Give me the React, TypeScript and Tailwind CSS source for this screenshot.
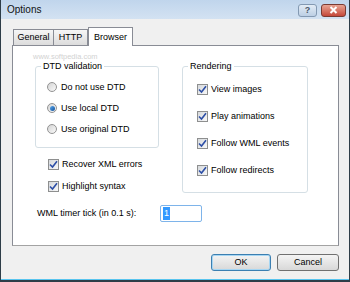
import React from "react";

const font = { fontFamily: '"Liberation Sans", Arial, sans-serif' };

function Check({ label }: { label: string }) {
  return (
    <div className="flex items-center h-[11px]">
      <div className="w-[11px] h-[11px] border border-[#8e8f8f] bg-gradient-to-br from-[#d6d9dc] to-[#f8f8f8] flex items-center justify-center">
        <svg width="9" height="9" viewBox="0 0 9 9">
          <path d="M1 4.5 L3.5 7 L8 1.2" fill="none" stroke="#2c4ea6" strokeWidth="1.6" />
        </svg>
      </div>
      <span className="ml-[3px] text-[9px] leading-none text-black">{label}</span>
    </div>
  );
}

function Radio({ label, on }: { label: string; on?: boolean }) {
  return (
    <div className="flex items-center h-[10px]">
      <div className="w-[10px] h-[10px] rounded-full border border-[#939393] bg-gradient-to-br from-[#d4d4d4] to-[#fafafa] flex items-center justify-center">
        {on && <div className="w-[5px] h-[5px] rounded-full bg-gradient-to-br from-[#5aa8ee] to-[#10509a]" />}
      </div>
      <span className="ml-[4px] text-[9px] leading-none text-black">{label}</span>
    </div>
  );
}

export default function App() {
  return (
    <div
      className="w-[350px] h-[282px] bg-[#f0f0f0] border-x border-b-2 border-[#2e3d48] flex flex-col relative overflow-hidden"
      style={font}
    >
      {/* title bar */}
      <div className="h-[19px] bg-gradient-to-b from-[#c0d5ec] to-[#d3e2f2] flex items-center pl-[6px] pr-[3px] shrink-0">
        <span className="text-[10px] text-[#111] leading-none">Options</span>
        <div className="ml-auto flex items-center gap-[4px] mt-[1px]">
          <div className="w-[19px] h-[13px] rounded-[3px] border border-[#8399b2] bg-gradient-to-b from-[#e3ecf6] to-[#bccfe4] flex items-center justify-center">
            <span className="text-[9px] font-bold text-[#4b5868] leading-none">?</span>
          </div>
          <div className="w-[25px] h-[13px] rounded-[3px] border border-[#7a3b33] bg-gradient-to-b from-[#e7a393] to-[#c4473a] flex items-center justify-center">
            <svg width="9" height="8" viewBox="0 0 9 8">
              <path d="M1.5 1 L7.5 7 M7.5 1 L1.5 7" stroke="#fff" strokeWidth="2" />
            </svg>
          </div>
        </div>
      </div>

      {/* body */}
      <div className="flex-1 border-b border-[#58c4ee] pl-[11px] pt-[8px] flex flex-col">
        {/* tabs */}
        <div className="flex items-end h-[19px] pl-[1px] relative z-10">
          <div className="w-[41px] h-[16px] mb-px border border-b-0 border-[#898c95] bg-gradient-to-b from-[#f6f6f6] to-[#dcdcdc] flex items-center justify-center text-[9px] text-black leading-none">
            General
          </div>
          <div className="w-[34px] h-[16px] mb-px border border-b-0 border-l-0 border-[#898c95] bg-gradient-to-b from-[#f6f6f6] to-[#dcdcdc] flex items-center justify-center text-[9px] text-black leading-none">
            HTTP
          </div>
          <div className="w-[45px] h-[19px] border border-b-0 border-[#898c95] bg-white flex items-start pt-[5px] justify-center text-[9px] text-black leading-none">
            Browser
          </div>
        </div>

        {/* panel */}
        <div className="w-[327px] h-[201px] -mt-px border border-[#898c95] border-b-[#a3a3a3] bg-white flex flex-col relative">
          <div className="absolute left-[20px] top-[7px] text-[7.5px] text-[#d2d2d2] leading-none">
            www.softpedia.com
          </div>
          <div className="flex pt-[20px] pl-[22px] gap-[23px]">
            {/* left column */}
            <div className="flex flex-col">
              <div className="relative w-[124px] h-[82px] border border-[#d5dfe5] rounded-[3px] pl-[11px] pt-[15px] flex flex-col gap-[11px]">
                <span className="absolute -top-[5px] left-[5px] bg-white px-[2px] text-[9px] leading-none text-black">
                  DTD validation
                </span>
                <Radio label="Do not use DTD" />
                <Radio label="Use local DTD" on />
                <Radio label="Use original DTD" />
              </div>
              <div className="flex flex-col gap-[11px] pl-[13px] mt-[11px]">
                <Check label="Recover XML errors" />
                <Check label="Highlight syntax" />
              </div>
            </div>
            {/* right column */}
            <div className="relative w-[126px] h-[127px] border border-[#d5dfe5] rounded-[3px] pl-[14px] pt-[17px] flex flex-col gap-[16px]">
              <span className="absolute -top-[5px] left-[5px] bg-white px-[2px] text-[9px] leading-none text-black">
                Rendering
              </span>
              <Check label="View images" />
              <Check label="Play animations" />
              <Check label="Follow WML events" />
              <Check label="Follow redirects" />
            </div>
          </div>
          <div className="flex items-center mt-[12px] pl-[24px]">
            <span className="text-[9px] leading-none text-black w-[123px]">WML timer tick (in 0.1 s):</span>
            <div className="w-[42px] h-[17px] border border-[#7eb4ea] rounded-[2px] bg-white flex items-center pl-[2px]">
              <span className="bg-[#3399ff] text-white text-[9px] leading-none px-[1px] py-[2px]">1</span>
            </div>
          </div>
        </div>

        {/* buttons */}
        <div className="w-[327px] flex justify-end gap-[6px] mt-[8px]">
          <div className="w-[60px] h-[17px] rounded-[3px] border border-[#3c7fb1] bg-gradient-to-b from-[#f4f4f4] to-[#d8d8d8] flex items-center justify-center text-[9px] text-black leading-none shadow-[inset_0_0_0_1px_#a6d6f3]">
            OK
          </div>
          <div className="w-[62px] h-[17px] rounded-[3px] border border-[#707070] bg-gradient-to-b from-[#f4f4f4] to-[#d8d8d8] flex items-center justify-center text-[9px] text-black leading-none">
            Cancel
          </div>
        </div>
      </div>
    </div>
  );
}
